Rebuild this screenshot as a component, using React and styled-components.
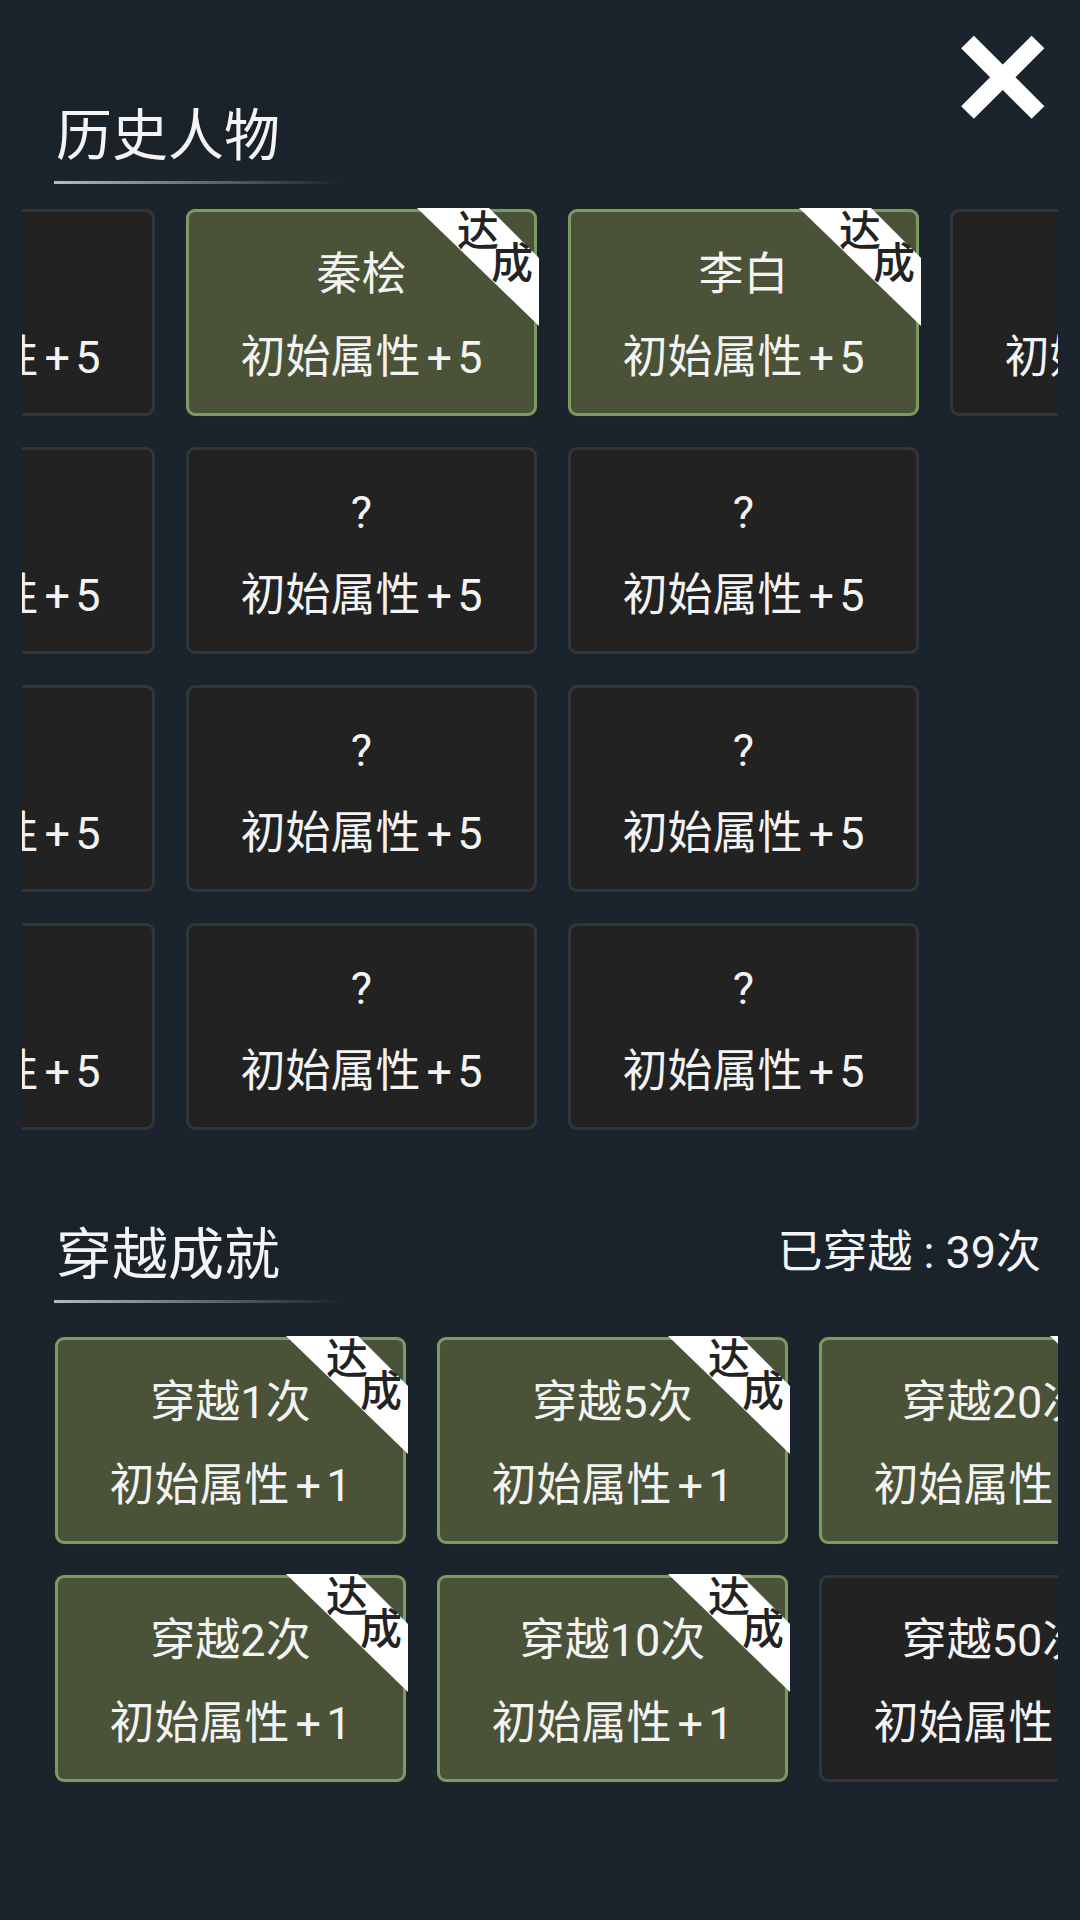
import React, { useLayoutEffect, useRef } from "react";
import styled, { createGlobalStyle } from "styled-components";

const GlobalStyle = createGlobalStyle`
  html, body {
    margin: 0;
    padding: 0;
    background: #1b242c;
  }
  body {
    font-family: Roboto, "Noto Sans CJK SC", "Noto Sans", sans-serif;
    color: #f3f3f3;
  }
`;

const Page = styled.div`
  position: relative;
  min-height: 1920px;
  box-sizing: border-box;
  padding-top: 78px;
  background: #1b242c;
`;

const CloseButton = styled.button`
  position: absolute;
  top: 35px;
  right: 35px;
  width: 85px;
  height: 85px;
  padding: 0;
  border: 0;
  background: transparent;
  cursor: pointer;
  svg {
    display: block;
  }
`;

const Section = styled.section`
  margin-top: ${(p) => p.$top || 0}px;
`;

const HeaderRow = styled.div`
  display: flex;
  align-items: flex-start;
  justify-content: space-between;
  margin: 0 33px 0 53px;
`;

const TitleBlock = styled.div`
  display: flex;
  flex-direction: column;
  align-items: flex-start;
`;

const Title = styled.h2`
  margin: 0;
  padding: 13px 3px 6px;
  font-family: "Noto Sans CJK SC", sans-serif;
  font-size: 56px;
  line-height: 80px;
  font-weight: 400;
  color: #f4f4f4;
  background: rgba(0, 0, 0, 0.035);
`;

const Underline = styled.div`
  margin-top: 4px;
  margin-left: 1px;
  width: 288px;
  height: 3px;
  background: linear-gradient(
    90deg,
    rgba(196, 203, 210, 0.9),
    rgba(196, 203, 210, 0.35) 60%,
    rgba(196, 203, 210, 0)
  );
`;

const Counter = styled.div`
  padding: 26px 6px 13px;
  font-size: 45px;
  line-height: 60px;
  color: #f4f4f4;
  background: rgba(0, 0, 0, 0.03);
  white-space: nowrap;
`;

const Colon = styled.span`
  display: inline-block;
  margin: 0 11px;
`;

const Scroller = styled.div`
  margin: ${(p) => p.$top}px 22px 0;
  padding: 2px 0 2px 33px;
  overflow-x: auto;
  overflow-y: hidden;
  scrollbar-width: none;
  &::-webkit-scrollbar {
    display: none;
  }
`;

const CardGrid = styled.div`
  display: grid;
  grid-auto-flow: column;
  grid-template-rows: repeat(${(p) => p.$rows}, 207px);
  grid-auto-columns: 351px;
  gap: 31px;
  width: max-content;
  padding-right: 33px;
`;

const Card = styled.div`
  position: relative;
  box-sizing: border-box;
  display: flex;
  flex-direction: column;
  align-items: center;
  justify-content: center;
  gap: 23px;
  padding-top: 8px;
  border-radius: 9px;
  border: 3px solid ${(p) => (p.$done ? "#7c9b62" : "#30363a")};
  background: ${(p) => (p.$done ? "#4a5237" : "#222222")};
  box-shadow: ${(p) => (p.$done ? "0 0 2px rgba(40, 60, 30, 0.9)" : "none")};
`;

const CardLine = styled.div`
  font-size: 45px;
  line-height: 60px;
  color: #f3f3f3;
  white-space: nowrap;
`;

const Plus = styled.span`
  display: inline-block;
  margin: 0 5px 0 6px;
`;

const Ribbon = styled.div`
  position: absolute;
  top: -4px;
  right: -5px;
  width: 122px;
  height: 118px;
  pointer-events: none;
`;

const RibbonBand = styled.div`
  position: absolute;
  inset: 0;
  background: #ffffff;
  clip-path: polygon(0 0, 72px 0, 100% 50px, 100% 100%);
`;

const RibbonText = styled.div`
  position: relative;
  display: flex;
  flex-direction: column;
  align-items: flex-start;
  padding: 0 0 0 40px;
  font-family: "Noto Sans CJK SC", sans-serif;
  font-size: 42px;
  line-height: 42px;
  font-weight: 500;
  color: #232323;
`;

const RibbonChar = styled.span`
  margin-left: ${(p) => (p.$second ? 34 : 0)}px;
  margin-top: ${(p) => (p.$second ? -10 : -1)}px;
`;

function CloseIcon() {
  return (
    <svg width="85" height="85" viewBox="0 0 85 85">
      <path
        d="M7.5 7 L78 77.5 M78 7 L7.5 77.5"
        stroke="#ffffff"
        strokeWidth="18"
        fill="none"
      />
    </svg>
  );
}

function AchievementCard({ name, bonus, done }) {
  return (
    <Card $done={done}>
      {done && (
        <Ribbon>
          <RibbonBand />
          <RibbonText>
            <RibbonChar>达</RibbonChar>
            <RibbonChar $second>成</RibbonChar>
          </RibbonText>
        </Ribbon>
      )}
      <CardLine>{name}</CardLine>
      <CardLine>
        初始属性<Plus>+</Plus>
        {bonus}
      </CardLine>
    </Card>
  );
}

function CardScroller({ items, rows, top, scroll = 0 }) {
  const ref = useRef(null);
  useLayoutEffect(() => {
    if (ref.current) ref.current.scrollLeft = scroll;
  }, [scroll]);
  return (
    <Scroller ref={ref} $top={top}>
      <CardGrid $rows={rows}>
        {items.map((it, i) => (
          <AchievementCard key={i} {...it} />
        ))}
      </CardGrid>
    </Scroller>
  );
}

const unknown = { name: "?", bonus: 5, done: false };
const figures = [
  unknown,
  unknown,
  unknown,
  unknown,
  { name: "秦桧", bonus: 5, done: true },
  unknown,
  unknown,
  unknown,
  { name: "李白", bonus: 5, done: true },
  unknown,
  unknown,
  unknown,
  unknown,
];

const travelCount = 39;
const travels = [1, 2, 5, 10, 20, 50, 100, 200].map((n) => ({
  name: `穿越${n}次`,
  bonus: 1,
  done: n <= travelCount,
}));

export default function App() {
  return (
    <Page>
      <GlobalStyle />
      <CloseButton aria-label="关闭">
        <CloseIcon />
      </CloseButton>

      <Section>
        <HeaderRow>
          <TitleBlock>
            <Title>历史人物</Title>
            <Underline />
          </TitleBlock>
        </HeaderRow>
        <CardScroller items={figures} rows={4} top={23} scroll={251} />
      </Section>

      <Section $top={65}>
        <HeaderRow>
          <TitleBlock>
            <Title>穿越成就</Title>
            <Underline />
          </TitleBlock>
          <Counter>
            已穿越<Colon>:</Colon>
            {travelCount}次
          </Counter>
        </HeaderRow>
        <CardScroller items={travels} rows={2} top={32} />
      </Section>
    </Page>
  );
}
